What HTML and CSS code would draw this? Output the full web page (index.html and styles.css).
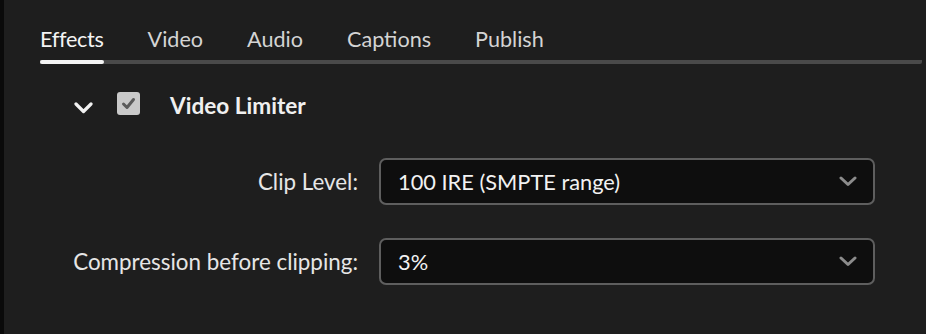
FILE: index.html
```html
<!DOCTYPE html>
<html lang="en">

<head>
    <meta charset="UTF-8">
    <meta name="viewport" content="width=device-width, initial-scale=1.0">
    <title>Effects</title>
    <link rel="stylesheet" href="styles.css">
</head>

<body>

    <div class="panel">
        <div class="edge"></div>

        <div class="content">
            <nav class="tabs">
                <span class="tab active">Effects</span>
                <span class="tab">Video</span>
                <span class="tab">Audio</span>
                <span class="tab">Captions</span>
                <span class="tab">Publish</span>
            </nav>

            <section class="effect">
                <div class="effect-head">
                    <svg class="twirl" width="19" height="12" viewBox="0 0 19 12">
                        <path d="M2 2 L9.5 9.5 L17 2" fill="none" stroke="#f2f2f2" stroke-width="3.2"
                            stroke-linecap="round" stroke-linejoin="round" />
                    </svg>
                    <span class="checkbox">
                        <svg width="15" height="13" viewBox="0 0 15 13">
                            <path d="M2.5 7 L6 10.5 L12.5 2.5" fill="none" stroke="#5a5a5a" stroke-width="3"
                                stroke-linecap="round" stroke-linejoin="round" />
                        </svg>
                    </span>
                    <span class="effect-title">Video Limiter</span>
                </div>

                <div class="fields">
                    <label class="field-label">Clip Level:</label>
                    <div class="select">
                        <span>100 IRE (SMPTE range)</span>
                        <svg width="18" height="11" viewBox="0 0 18 11">
                            <path d="M2 2 L9 8.5 L16 2" fill="none" stroke="#8c8c8c" stroke-width="3"
                                stroke-linecap="round" stroke-linejoin="round" />
                        </svg>
                    </div>

                    <label class="field-label">Compression before clipping:</label>
                    <div class="select">
                        <span>3%</span>
                        <svg width="18" height="11" viewBox="0 0 18 11">
                            <path d="M2 2 L9 8.5 L16 2" fill="none" stroke="#8c8c8c" stroke-width="3"
                                stroke-linecap="round" stroke-linejoin="round" />
                        </svg>
                    </div>
                </div>
            </section>
        </div>
    </div>

</body>

</html>
```

FILE: styles.css
```css
body {
    margin: 0;
    background-color: #1e1e1e;
    font-family: Lato, "Open Sans", sans-serif;
    color: #e8e8e8;
}

.panel {
    display: flex;
    height: 334px;
}

.edge {
    width: 4px;
    background-color: #0a0a0a;
    flex-shrink: 0;
}

.content {
    flex: 1;
}

.tabs {
    display: flex;
    gap: 44px;
    margin-left: 36px;
    width: 882px;
    padding-top: 25px;
    border-bottom: 4px solid #4a4a4a;
    border-radius: 0 2px 2px 0;
}

.tab {
    position: relative;
    font-size: 21.6px;
    line-height: 28px;
    padding-bottom: 7px;
    color: #d4d4d4;
}

.tab.active {
    color: #f4f4f4;
    letter-spacing: -0.3px;
}

.tab.active::after {
    content: "";
    position: absolute;
    left: 0;
    right: 0;
    bottom: -4px;
    height: 4px;
    border-radius: 2px;
    background-color: #f4f4f4;
}

.effect-head {
    display: flex;
    align-items: center;
    height: 23px;
    margin-top: 28px;
    padding-left: 70px;
}

.twirl {
    margin-top: 9px;
    margin-right: 24px;
}

.checkbox {
    display: flex;
    align-items: center;
    justify-content: center;
    width: 23px;
    height: 23px;
    border-radius: 3px;
    background-color: #c9c9c9;
    margin-right: 30px;
}

.effect-title {
    font-size: 22.6px;
    font-weight: bold;
    color: #f0f0f0;
    margin-top: 3px;
}

.fields {
    display: grid;
    grid-template-columns: 354px 496px;
    column-gap: 21px;
    row-gap: 33px;
    margin-top: 43px;
}

.field-label {
    text-align: right;
    align-self: center;
    font-size: 22.4px;
    color: #e6e6e6;
}

.select {
    display: flex;
    align-items: center;
    justify-content: space-between;
    height: 47px;
    box-sizing: border-box;
    padding: 0 16px 0 17px;
    background-color: #0e0e0e;
    border: 2px solid #5e5e5e;
    border-radius: 7px;
    font-size: 21.8px;
    color: #f2f2f2;
}
```
